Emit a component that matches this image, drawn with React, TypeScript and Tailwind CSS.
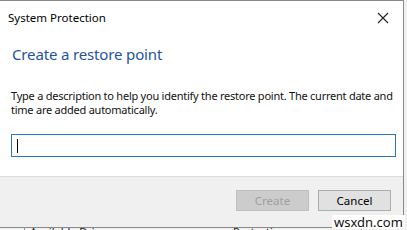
import React from "react";

export default function App() {
  const font = { fontFamily: '"Noto Sans", "Open Sans", sans-serif' };
  return (
    <div
      className="relative w-[407px] h-[230px] overflow-hidden bg-[#f0f0f0]"
      style={font}
    >
      <div className="flex flex-col w-[404px] h-[228px] bg-white border-t border-r border-b border-[#8a8a8a]">
        <div className="flex items-center justify-between h-[33px] pl-[8px] pr-[12px] shrink-0">
          <span className="text-[11.5px] leading-[14px] text-[#000] whitespace-nowrap">System Protection</span>
          <svg width="12" height="12" viewBox="0 0 12 12" className="mr-[2px]">
            <path d="M1 1 L11 11 M11 1 L1 11" stroke="#222" strokeWidth="1.1" fill="none" />
          </svg>
        </div>
        <div className="px-[11px] bg-white shrink-0">
          <div className="mt-[10px] h-[20px] text-[15px] leading-[20px] text-[#1f52a3] tracking-[-0.15px] pl-[1px] whitespace-nowrap">
            Create a restore point
          </div>
          <div className="mt-[25px] text-[11px] leading-[14px] text-[#111] tracking-[-0.24px] whitespace-nowrap">
            <div>Type a description to help you identify the restore point. The current date and</div>
            <div>time are added automatically.</div>
          </div>
          <div className="mt-[17px] w-[385px] h-[23px] border border-[#2c78be] flex items-center pl-[5px]">
            <div className="w-[1px] h-[14px] bg-black" />
          </div>
        </div>
        <div className="mt-[19px] flex-1 border-t border-[#dcdcdc] bg-[#f0f0f0] flex justify-end items-start pt-[13px] pr-[12px] gap-[9px]">
          <div className="w-[73px] h-[21px] border border-[#bfbfbf] bg-[#cccccc] text-[#a0a0a0] text-[11.5px] flex items-center justify-center">
            Create
          </div>
          <div className="w-[73px] h-[21px] border border-[#adadad] bg-[#e1e1e1] text-[#000] text-[11.5px] flex items-center justify-center">
            Cancel
          </div>
        </div>
      </div>
      <div className="flex items-start h-[2px] overflow-hidden text-[11px] leading-[12px] text-[#222]">
        <div className="ml-[24px] w-[1px] h-[4px] bg-[#999]" />
        <span className="ml-[5px] -mt-[2px] w-[203px] whitespace-nowrap">Available Drives</span>
        <span className="-mt-[2px] w-[128px] whitespace-nowrap">Protection</span>
        <div className="w-[1px] h-[4px] bg-[#999]" />
      </div>
      <div className="absolute left-[332px] top-[215px] h-[14px] px-[2px] bg-white text-[13px] leading-[14px] text-[#111]">
        wsxdn.com
      </div>
    </div>
  );
}
